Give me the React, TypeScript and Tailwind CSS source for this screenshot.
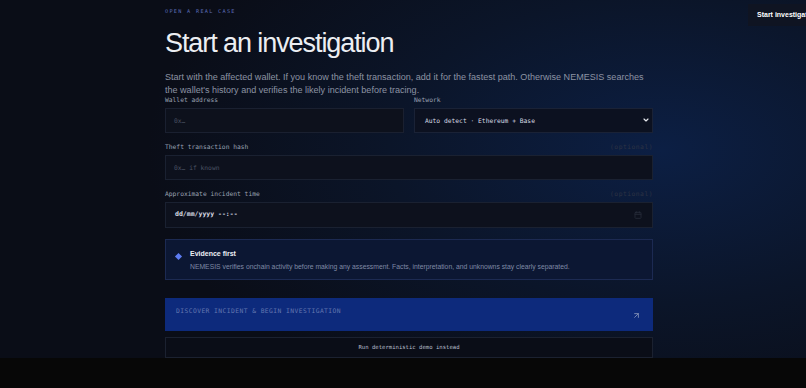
import { ArrowUpRight, Calendar, ChevronDown } from 'lucide-react';

const mono = "font-['DejaVu_Sans_Mono','Liberation_Mono',monospace]";
const sans = "font-['Liberation_Sans',Arial,sans-serif]";

function Label({ text, optional }: { text: string; optional?: boolean }) {
    return (
        <div className={`flex items-center justify-between h-[8px] text-[6.3px] leading-[8px] ${mono}`}>
            <span className="text-[#9aa1b2]">{text}</span>
            {optional && <span className="text-[#2c3344] tracking-[0.08em]">(optional)</span>}
        </div>
    );
}

export default function App() {
    return (
        <div className={`w-full min-h-[388px] bg-[#070707] ${sans}`}>
            {/* Main section */}
            <div className="relative h-[358px] overflow-hidden bg-[radial-gradient(ellipse_75%_95%_at_82%_42%,#0c1f44_0%,#0b1529_45%,#0a0d17_85%)]">
                {/* Header action */}
                <div className="absolute top-[4px] left-[748px] h-[22px] pl-[9px] pr-4 flex items-center bg-[#0f1422] whitespace-nowrap">
                    <span className="text-[7px] font-bold text-white">Start investigation</span>
                </div>

                <div className="w-[488px] ml-[165px] pt-[7px]">
                    <div className={`h-[8px] leading-[8px] text-[5.2px] tracking-[0.25em] text-[#5b6cb8] ${mono}`}>
                        OPEN A REAL CASE
                    </div>

                    <h1 className="mt-[14px] text-[27px] leading-[28px] tracking-[-0.04em] text-[#eceef2] whitespace-nowrap">
                        Start an investigation
                    </h1>

                    <p className="mt-[13.5px] text-[9.05px] leading-[13px] text-[#8c93a3] w-[490px]">
                        Start with the affected wallet. If you know the theft transaction, add it for the fastest path. Otherwise NEMESIS searches the wallet's history and verifies the likely incident before tracing.
                    </p>

                    {/* Wallet + network */}
                    <div className="-mt-[0.5px] grid grid-cols-2 gap-[10px]">
                        <div>
                            <Label text="Wallet address" />
                            <div className={`mt-[4px] h-[24.5px] flex items-center px-[8px] bg-[#0d111c] border border-[#1a2030] text-[6.3px] text-[#4b5263] ${mono}`}>
                                0x…
                            </div>
                        </div>
                        <div>
                            <Label text="Network" />
                            <div className={`mt-[4px] h-[24.5px] flex items-center justify-between pl-[10px] pr-[2px] bg-[#0c1120] border border-[#1a2236] text-[6.3px] text-[#d7dbe4] ${mono}`}>
                                <span>Auto detect · Ethereum + Base</span>
                                <ChevronDown size={8} strokeWidth={3.5} className="text-[#e6e8ee]" />
                            </div>
                        </div>
                    </div>

                    {/* Tx hash */}
                    <div className="mt-[10.5px]">
                        <Label text="Theft transaction hash" optional />
                        <div className={`mt-[4px] h-[24.5px] flex items-center px-[8px] bg-[#0d111d] border border-[#1a2131] text-[6.3px] text-[#4b5263] ${mono}`}>
                            0x… if known
                        </div>
                    </div>

                    {/* Time */}
                    <div className="mt-[10px]">
                        <Label text="Approximate incident time" optional />
                        <div className={`mt-[4px] h-[26px] flex items-center justify-between pl-[9px] pr-[10px] bg-[#0d111d] border border-[#1a2131] text-[6.5px] font-bold text-[#d5d9e2] ${mono}`}>
                            <span>dd/mm/yyyy --:--</span>
                            <Calendar size={8} strokeWidth={2.5} className="text-[#262c3a]" />
                        </div>
                    </div>

                    {/* Evidence note */}
                    <div className="mt-[11px] h-[41px] flex items-start gap-[8px] pl-[10px] pt-[9px] bg-[#0c1733] border border-[#1c2a52]">
                        <span className="mt-[5px] w-[5px] h-[5px] rotate-45 bg-[#5d7cf2] shrink-0" />
                        <div className="ml-[1px]">
                            <div className="text-[7px] leading-[10px] font-bold text-[#eef0f5]">Evidence first</div>
                            <div className="mt-[3px] text-[6.8px] leading-[9px] text-[#7f89a5] whitespace-nowrap">
                                NEMESIS verifies onchain activity before making any assessment. Facts, interpretation, and unknowns stay clearly separated.
                            </div>
                        </div>
                    </div>

                    {/* Primary */}
                    <button className={`mt-[18px] w-full h-[33px] flex items-center justify-between pl-[11px] pr-[12px] bg-[#0d2a7c] text-[6.3px] tracking-[0.07em] text-[#6377b0] ${mono}`}>
                        <span className="-mt-[6px]">DISCOVER INCIDENT &amp; BEGIN INVESTIGATION</span>
                        <ArrowUpRight size={9} strokeWidth={2.5} className="text-[#7d8cb4] mt-[3px]" />
                    </button>

                    {/* Secondary */}
                    <button className={`mt-[6.5px] w-full h-[21px] flex items-center justify-center bg-[#0a0d17] border border-[#1b2130] text-[5.6px] text-[#b9bfcc] ${mono}`}>
                        Run deterministic demo instead
                    </button>
                </div>
            </div>
        </div>
    );
}
